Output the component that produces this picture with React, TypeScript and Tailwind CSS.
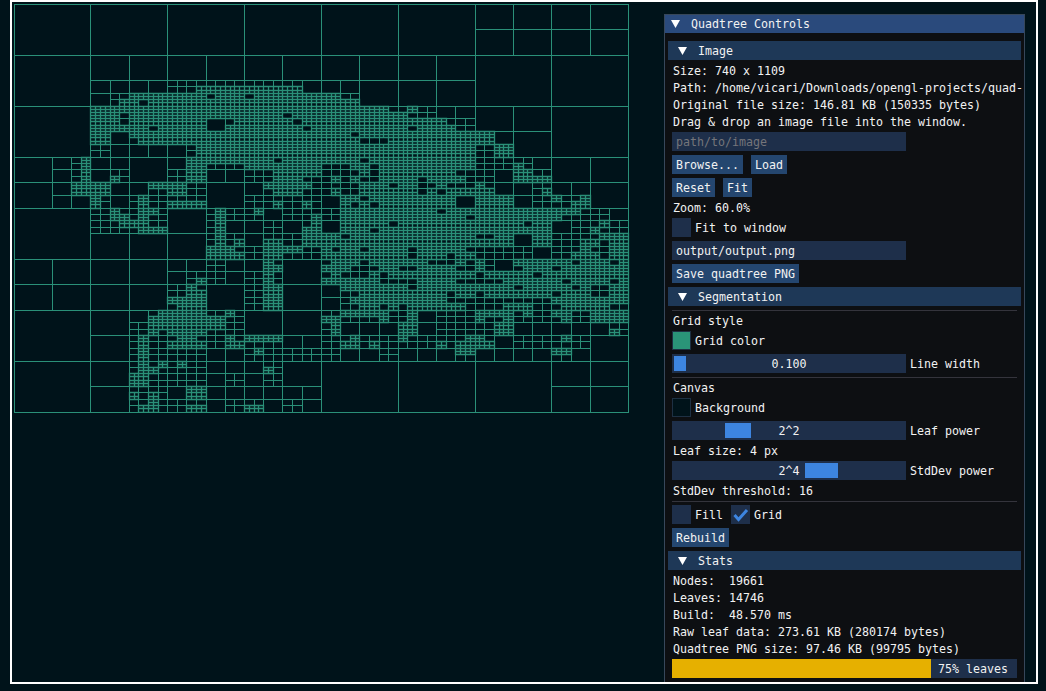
const MAP = [
  '33333333 33333333 33333333 33333333 33333333 33333333 44444444 44444444',
  '33333333 33333333 33333333 33333333 33333333 33333333 44444444 44444444',
  '33333333 33333333 33333333 33333333 33333333 33333333 44444444 44444444',
  '33333333 33333333 33333333 33333333 33333333 33333333 44444444 44444444',
  '33333333 33333333 33333333 33333333 33333333 33333333 44444444 44444444',
  '33333333 33333333 33333333 33333333 33333333 33333333 44444444 44444444',
  '33333333 33333333 33333333 33333333 33333333 33333333 44444444 44444444',
  '33333333 33333333 33333333 33333333 33333333 33333333 44444444 44444444',
  // y 55-106
  '33333333 44444444 44444444 44444444 44444444 44444444 33333333 33333333',
  '33333333 44444444 44444444 44444444 44444444 44444444 33333333 33333333',
  '33333333 44444444 44444444 44444444 44444444 44444444 33333333 33333333',
  '33333333 44444444 44444444 44444444 44444444 44444444 33333333 33333333',
  '33333333 55555555 66666666 66666655 55554444 44444444 33333333 33333333',
  '33333333 55555555 66677777 77777755 55554444 44444444 33333333 33333333',
  '33333333 55x67777 77777777 77777777 77664444 44444444 33333333 33333333',
  '33333333 55xx7777 77777777 77777777 77774444 44444444 33333333 33333333',
  // y 106-157
  '33333333 x7777777 77777777 77777777 77777777 77665555 44444444 33333333',
  '33333333 77777777 77777777 77777777 77777777 77665555 44444444 33333333',
  '33333333 77777777 77777777 77777777 77777777 7777x666 44444444 33333333',
  '33333333 77777777 77777777 77777777 77777777 77777766 44444444 33333333',
  '33333333 xx557777 77777777 7777x777 77777777 77777777 xx554444 33333333',
  '33333333 xx557777 77777777 77777777 77777x77 7777777x 7x554444 33333333',
  '33333333 66555555 556x7777 77777777 77777777 77777777 66xx4444 33333333',
  '33333333 66555555 556x7777 77777777 77777777 7777777x 66xx4444 33333333',
  // y 157-208
  '44445567 55554444 55777777 77777777 7x777777 77777777 66666x55 44444444',
  '44445567 55554444 55776666 77777777 66xx7777 777777x7 xx66x655 44444444',
  '44445567 55x64444 66775555 66xx7777 x666xx77 777777x6 66557x66 44444444',
  '44445567 55x64444 66775555 66x777xx 6x6xx677 777777x6 6655x77x 44444444',
  '44445577 77555577 77664444 557777x6 6x66777x 7777x6x6 7x55556x 55554444',
  '44445577 77555566 77664444 55x77766 xx6x7x77 77777777 775555x7 55554444',
  '44445555 76556766 66664444 6666x666 557xxx77 77777777 77775566 x6x74444',
  '44445555 76556766 x7774444 66x766x6 557x7x77 7777777x 77775566 x6774444',
  // y 208-259
  '33333333 66xx6xx6 4444676x 6x5566x6 6x777777 77777777 77777777 7xx66655',
  '33333333 66xx6x66 44446766 6655666x xx777777 77777777 77777777 7xx66655',
  '33333333 666xx766 44446755 5566556x 55x777x5 77777777 77777777 55666x55',
  '33333333 55666x77 44446755 556655xx 55777777 77777777 77777777 5566xx65',
  '33333333 44444444 4444676x 55665577 77777777 77777777 66777777 66666x77',
  '33333333 44444444 4444676x 55x76677 7x777777 777x7777 7x777777 666xx677',
  '33333333 44444444 4444x7xx 557777x6 7x776x77 76777777 66666655 66x7x677',
  '33333333 44444444 4444x7xx 667x6666 77777777 76777777 66666655 66777x77',
  // y 259-310
  '44444444 44444444 55556655 557x4444 6x77x777 777xx6x6 x6557777 777777x7',
  '44444444 44444444 5555x655 557x4444 x77766x7 66777x6x x6557777 67777x77',
  '44444444 44444444 55666655 66x64444 776xx76x 777777x7 6x777777 77777777',
  '44444444 44444444 556x6655 66764444 77777755 6777776x 666x7777 77777767',
  '44444444 44444444 55764444 66774444 7777x777 77777777 7777x777 77x76x77',
  '44444444 44444444 66774444 66x74444 77667777 77777x77 x777777x 677x6677',
  '44444444 44444444 77774444 667x4444 55x77777 x7777x66 66666666 7777x77x',
  '44444444 44444444 67774444 66774444 5555x777 677777xx 66677766 x7777766',
  // y 310-361
  '33333333 4444556x x777x6x5 44444444 66x7x7x6 6x556666 77776x66 x7667777',
  '33333333 44445577 77777766 44444444 7766x6x6 6x556666 7x676666 6x667x77',
  '33333333 44446677 77777766 44444444 6x555555 77556666 667x5555 55555566',
  '33333333 44446x76 7777x766 44444444 6x555555 77556666 66775555 55555576',
  '33333333 44446766 x7x6x677 7x775555 66x7x666 766666xx 7x556666 6x664444',
  '33333333 44446766 777x6677 66665555 66776x66 6666x67x 77556666 66664444',
  '33333333 4444676x 66x65555 6x665555 66555566 555555x7 55555555 x7554444',
  '33333333 4444676x 66665555 6666x665 66555566 55555566 55555555 66554444',
  // y 361-412
  '33333333 44446767 77665555 55x64444 33333333 33333333 33333333 44444444',
  '33333333 44446776 66665555 55x64444 33333333 33333333 33333333 44444444',
  '33333333 44447766 66665566 55664444 33333333 33333333 33333333 44444444',
  '33333333 44447766 66665566 55664444 33333333 33333333 33333333 44444444',
  '33333333 44446666 557x5555 55555555 33333333 33333333 33333333 44444444',
  '33333333 4444x676 557x5555 55555555 33333333 33333333 33333333 44444444',
  '33333333 444466x5 66665566 66556655 33333333 33333333 33333333 44444444',
  '33333333 4444x7x5 667755x6 x7556655 33333333 33333333 33333333 44444444',
].map((r) => r.replace(/ /g, ''))

const cell = (c: number, r: number) => MAP[r]?.[c] ?? '3'

function hash(a: number, b: number, c: number) {
  let h = (a * 73856093) ^ (b * 19349663) ^ (c * 83492791)
  h = Math.imul(h ^ (h >>> 13), 1274126177)
  h = Math.imul(h ^ (h >>> 16), 2246822519)
  return ((h ^ (h >>> 15)) >>> 0) / 4294967296
}

function buildPaths() {
  const X = (i: number, d: number) => Math.floor((614.8 * i) / 2 ** d) + 0.5
  const Y = (j: number, d: number) => Math.floor((408 * j) / 2 ** d) + 0.5
  const coarse: string[] = []
  const fine: string[] = []

  const walk = (d: number, i: number, j: number) => {
    let leaf = d >= 7
    if (!leaf) {
      const n = 1 << (6 - d)
      let want = 0
      let dense = 0
      let mixed = 0
      for (let r = j * n; r < (j + 1) * n; r++) {
        for (let c = i * n; c < (i + 1) * n; c++) {
          const v = cell(c, r)
          if (v === 'x') mixed++
          else if (v === '7') dense++
          want = Math.max(want, v === 'x' ? 7 : Number(v))
        }
      }
      if (d >= want) leaf = true
      else if (d >= 5 && dense + mixed === n * n) {
        const p = d === 6 ? (mixed ? 0.35 : 0.05) : mixed ? 0.05 : 0.008
        if (hash(d, i, j) < p) leaf = true
      }
    }
    if (leaf) {
      const rect = `M${X(i, d)} ${Y(j, d)}H${X(i + 1, d)}V${Y(j + 1, d)}H${X(i, d)}Z`
      if (d >= 7) fine.push(rect)
      else coarse.push(rect)
      return
    }
    walk(d + 1, i * 2, j * 2)
    walk(d + 1, i * 2 + 1, j * 2)
    walk(d + 1, i * 2, j * 2 + 1)
    walk(d + 1, i * 2 + 1, j * 2 + 1)
  }
  walk(0, 0, 0)
  return { coarse: coarse.join(''), fine: fine.join('') }
}

const gridPaths = buildPaths()

function Arrow() {
  return (
    <svg width="9" height="8" viewBox="0 0 9 8" className="shrink-0">
      <polygon points="0,0 9,0 4.5,8" fill="#ffffff" />
    </svg>
  )
}

function Header({ label }: { label: string }) {
  return (
    <div className="flex h-[19px] items-center bg-[#1e3857] pl-[10px]">
      <Arrow />
      <span className="ml-[11px] pt-[2px]">{label}</span>
    </div>
  )
}

function Line({ children }: { children: React.ReactNode }) {
  return <div className="mx-1 h-[13px] pl-px pt-[1px] whitespace-pre">{children}</div>
}

function Btn({ label }: { label: string }) {
  return <div className="flex h-[19px] items-center bg-[#24466f] px-1 pt-[2px]">{label}</div>
}

function Sep() {
  return <div className="mx-1 -mb-px h-px bg-[#34343c]" />
}

function Input({ value, muted = false }: { value: string; muted?: boolean }) {
  return (
    <div className={`mx-1 flex h-[19px] w-[234px] items-center bg-[#1e2f4a] px-1 pt-[2px] ${muted ? 'text-[#75757a]' : ''}`}>
      {value}
    </div>
  )
}

function Check({ label, checked = false }: { label: string; checked?: boolean }) {
  return (
    <div className="flex items-center gap-1">
      <div className="h-[19px] w-[19px] bg-[#1e2f4a]">
        {checked && (
          <svg width="19" height="19" viewBox="0 0 19 19">
            <path d="M3.5 10 L7.5 14.5 L16 5" fill="none" stroke="#3d85e0" strokeWidth="3" />
          </svg>
        )}
      </div>
      <span className="pt-[2px]">{label}</span>
    </div>
  )
}

function Swatch({ label, color }: { label: string; color: string }) {
  return (
    <div className="mx-1 flex items-center gap-1">
      <div className={`h-[19px] w-[19px] border border-[#1e3043] ${color}`} />
      <span className="pt-[2px]">{label}</span>
    </div>
  )
}

function Slider({ value, label, grab }: { value: string; label: string; grab: string }) {
  return (
    <div className="mx-1 flex items-center gap-1">
      <div className="relative flex h-[19px] w-[234px] items-center justify-center bg-[#1e2f4a]">
        <div className={`absolute top-[2px] h-[15px] bg-[#3d85e0] ${grab}`} />
        <span className="relative pt-[2px]">{value}</span>
      </div>
      <span className="pt-[2px]">{label}</span>
    </div>
  )
}

export default function App() {
  return (
    <div className="h-[691px] w-[1046px] overflow-hidden bg-[#00131a] pl-[10px] font-['DejaVu_Sans_Mono',monospace] text-[11.63px] leading-[13px] text-[#f2f2f2]">
      <div className="flex h-[684px] w-[1028px] overflow-hidden border-2 border-white">
        <div className="pt-[2px] pl-[2px]">
          <svg width="616" height="409" viewBox="0 0 616 409" className="block">
            <path d={gridPaths.coarse} fill="none" stroke="#2a9078" strokeWidth="1" shapeRendering="crispEdges" />
            <path d={gridPaths.fine} fill="none" stroke="#2a9078" strokeWidth="1.3" />
          </svg>
        </div>
        <div className="mt-[12px] ml-[34px] flex w-[361px] shrink-0 flex-col border-x border-t border-[#37475a] bg-[#0d0f12]">
          <div className="flex h-[18px] shrink-0 items-center bg-[#2a4a7c] pl-[6px]">
            <Arrow />
            <span className="ml-[11px] pt-[1px]">Quadtree Controls</span>
          </div>
          <div className="flex flex-col gap-1 px-[3px] pt-2">
            <Header label="Image" />
            <Line>Size: 740 x 1109</Line>
            <Line>Path: /home/vicari/Downloads/opengl-projects/quad-</Line>
            <Line>Original file size: 146.81 KB (150335 bytes)</Line>
            <Line>Drag &amp; drop an image file into the window.</Line>
            <Input value="path/to/image" muted />
            <div className="mx-1 flex gap-2">
              <Btn label="Browse..." />
              <Btn label="Load" />
            </div>
            <div className="mx-1 flex gap-2">
              <Btn label="Reset" />
              <Btn label="Fit" />
            </div>
            <Line>Zoom: 60.0%</Line>
            <div className="mx-1">
              <Check label="Fit to window" />
            </div>
            <Input value="output/output.png" />
            <div className="mx-1 flex">
              <Btn label="Save quadtree PNG" />
            </div>
            <Header label="Segmentation" />
            <Sep />
            <Line>Grid style</Line>
            <Swatch label="Grid color" color="bg-[#2a9478]" />
            <Slider value="0.100" label="Line width" grab="left-[2px] w-[12px]" />
            <Sep />
            <Line>Canvas</Line>
            <Swatch label="Background" color="bg-[#00131a]" />
            <Slider value="2^2" label="Leaf power" grab="left-[53px] w-[26px]" />
            <Line>Leaf size: 4 px</Line>
            <Slider value="2^4" label="StdDev power" grab="left-[133px] w-[33px]" />
            <Line>StdDev threshold: 16</Line>
            <Sep />
            <div className="mx-1 flex gap-2">
              <Check label="Fill" />
              <Check label="Grid" checked />
            </div>
            <div className="mx-1 flex">
              <Btn label="Rebuild" />
            </div>
            <Header label="Stats" />
            <Line>Nodes:  19661</Line>
            <Line>Leaves: 14746</Line>
            <Line>Build:  48.570 ms</Line>
            <Line>Raw leaf data: 273.61 KB (280174 bytes)</Line>
            <Line>Quadtree PNG size: 97.46 KB (99795 bytes)</Line>
            <div className="mx-1 flex h-[19px] items-center bg-[#1e2f4a]">
              <div className="h-full w-[259px] bg-[#e6b000]" />
              <span className="ml-[7px] pt-[2px]">75% leaves</span>
            </div>
          </div>
        </div>
      </div>
    </div>
  )
}
